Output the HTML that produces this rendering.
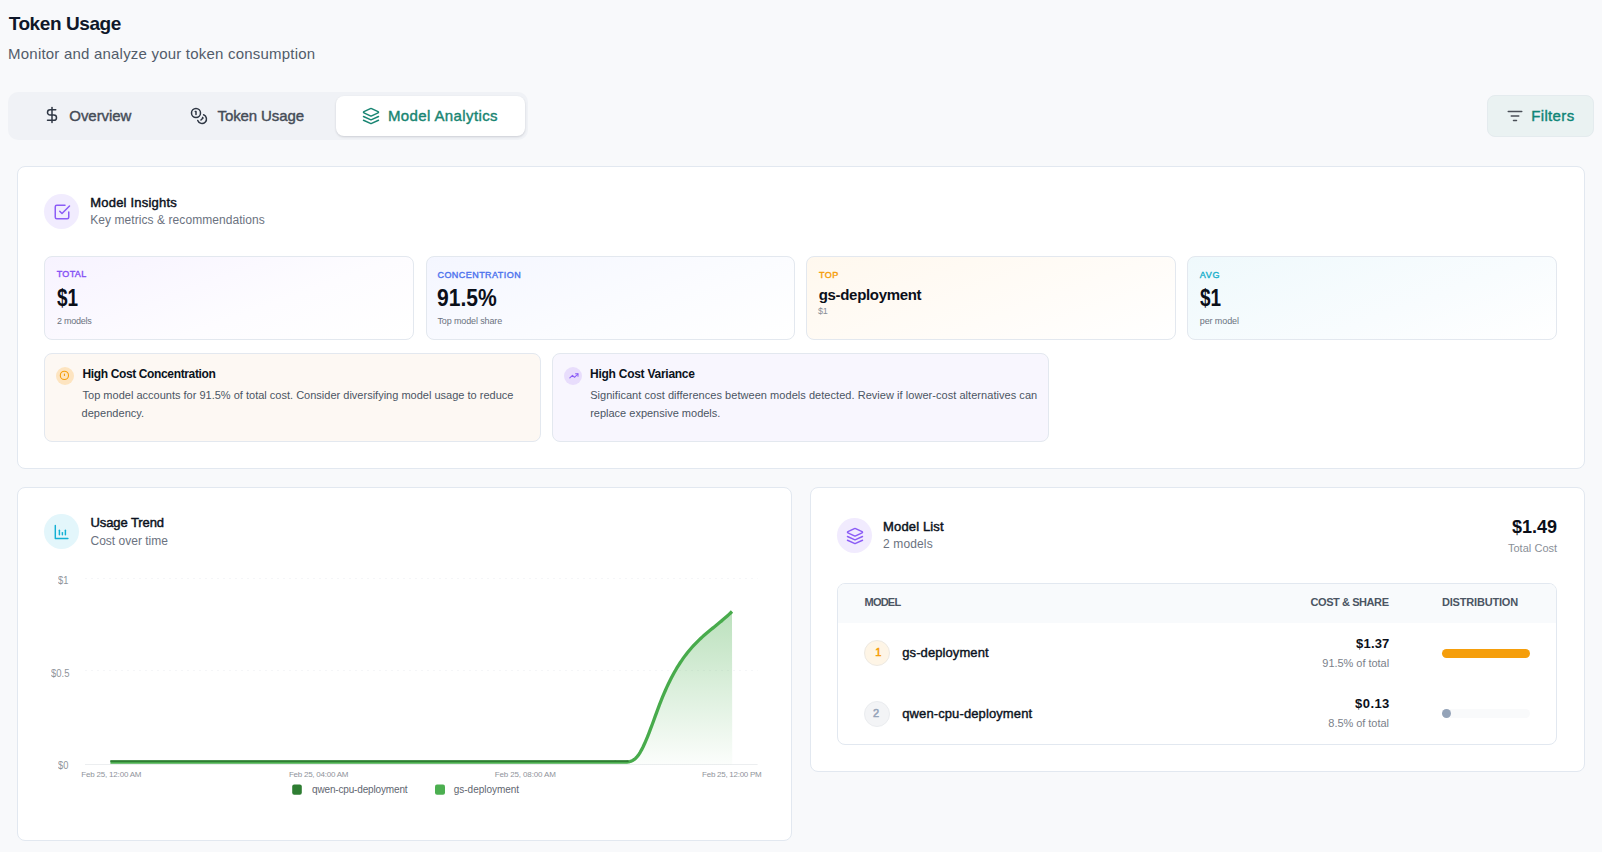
<!DOCTYPE html>
<html><head><meta charset="utf-8"><title>Token Usage</title>
<style>
html,body{margin:0;padding:0;}
body{width:1602px;height:852px;overflow:hidden;background:#f8f9fb;position:relative;font-family:"Liberation Sans", sans-serif;}
.b{position:absolute;}
.ic{position:absolute;overflow:visible;}
.t{position:absolute;white-space:nowrap;}
</style></head><body>
<div class="b" style="left:8px;top:92px;width:520px;height:48px;background:#f0f2f6;border-radius:10px;"></div>
<div class="b" style="left:336px;top:96px;width:189px;height:40px;background:#fff;border-radius:8px;box-shadow:0 1px 2px rgba(16,24,40,.10),0 1px 3px rgba(16,24,40,.06);"></div>
<div class="b" style="left:1487px;top:95px;width:107px;height:42px;background:#eaf2f2;border-radius:8px;border:1px solid #e4ebee;box-sizing:border-box;"></div>
<div class="b" style="left:17px;top:166px;width:1568px;height:303px;background:#fff;border:1px solid #e2e8f0;border-radius:8px;box-sizing:border-box;"></div>
<div class="b" style="left:44px;top:193.7px;width:35.2px;height:35.20000000000002px;background:#f1ecfe;border-radius:50%;"></div>
<div class="b" style="left:44px;top:256px;width:369.5px;height:84px;background:linear-gradient(160deg,#f7f3ff 0%,#fdfcff 60%,#ffffff 100%);border:1px solid #e3e8ef;border-radius:8px;box-sizing:border-box;"></div>
<div class="b" style="left:425.5px;top:256px;width:369.5px;height:84px;background:linear-gradient(160deg,#f4f6ff 0%,#fbfcff 60%,#ffffff 100%);border:1px solid #e3e8ef;border-radius:8px;box-sizing:border-box;"></div>
<div class="b" style="left:806px;top:256px;width:369.5px;height:84px;background:linear-gradient(160deg,#fff8ee 0%,#fffcf8 60%,#ffffff 100%);border:1px solid #e3e8ef;border-radius:8px;box-sizing:border-box;"></div>
<div class="b" style="left:1187px;top:256px;width:369.5px;height:84px;background:linear-gradient(160deg,#eff9fc 0%,#f8fcfe 60%,#ffffff 100%);border:1px solid #e3e8ef;border-radius:8px;box-sizing:border-box;"></div>
<div class="b" style="left:44px;top:353px;width:496.5px;height:88.5px;background:#fdf8f3;border:1px solid #e3e8ef;border-radius:8px;box-sizing:border-box;"></div>
<div class="b" style="left:552px;top:353px;width:496.5px;height:88.5px;background:#f8f6fe;border:1px solid #e3e8ef;border-radius:8px;box-sizing:border-box;"></div>
<div class="b" style="left:56px;top:367px;width:18px;height:18px;background:#fde4c0;border-radius:50%;"></div>
<div class="b" style="left:564px;top:367px;width:18px;height:18px;background:#e8ddfc;border-radius:50%;"></div>
<div class="b" style="left:17px;top:487px;width:775px;height:354px;background:#fff;border:1px solid #e2e8f0;border-radius:8px;box-sizing:border-box;"></div>
<div class="b" style="left:44.1px;top:513.9px;width:35.300000000000004px;height:35.5px;background:#e3f6fb;border-radius:50%;"></div>
<div class="b" style="left:810px;top:487px;width:775px;height:285px;background:#fff;border:1px solid #e2e8f0;border-radius:8px;box-sizing:border-box;"></div>
<div class="b" style="left:837.1px;top:517.9px;width:35.10000000000002px;height:35.10000000000002px;background:#f1ebfe;border-radius:50%;"></div>
<div class="b" style="left:837px;top:583px;width:720px;height:162px;background:#fff;border:1px solid #e2e8f0;border-radius:8px;box-sizing:border-box;overflow:hidden;"></div>
<div class="b" style="left:838px;top:584px;width:718px;height:39px;background:#f8fafc;border-radius:7px 7px 0 0;"></div>
<div class="b" style="left:864px;top:640px;width:26px;height:26px;background:#fef5e6;border:1px solid #ede9e2;border-radius:50%;box-sizing:border-box;"></div>
<div class="b" style="left:864px;top:701px;width:26px;height:26px;background:#f3f4f6;border:1px solid #eaecef;border-radius:50%;box-sizing:border-box;"></div>
<div class="b" style="left:1442px;top:649px;width:88px;height:9px;background:#f59e0b;border-radius:5px;"></div>
<div class="b" style="left:1442px;top:709px;width:88px;height:9px;background:#f9fafb;border-radius:5px;"></div>
<div class="b" style="left:1442px;top:709px;width:8.5px;height:9px;background:#94a3b8;border-radius:5px;"></div>
<svg class="ic" style="left:42.6px;top:106.3px;width:18px;height:18px" viewBox="0 0 24 24" fill="none" stroke="#2f3744" stroke-width="2" stroke-linecap="round" stroke-linejoin="round"><line x1="12" x2="12" y1="2" y2="22"/><path d="M17 5H9.5a3.5 3.5 0 0 0 0 7h5a3.5 3.5 0 0 1 0 7H6"/></svg>
<svg class="ic" style="left:189.7px;top:106.5px;width:18px;height:18px" viewBox="0 0 24 24" fill="none" stroke="#2f3744" stroke-width="2" stroke-linecap="round" stroke-linejoin="round"><circle cx="8" cy="8" r="6"/><path d="M18.09 10.37A6 6 0 1 1 10.34 18"/><path d="M7 6h1v4"/><path d="m16.71 13.88.7.71-2.82 2.82"/></svg>
<svg class="ic" style="left:361.5px;top:106.5px;width:18px;height:18px" viewBox="0 0 24 24" fill="none" stroke="#188572" stroke-width="2" stroke-linecap="round" stroke-linejoin="round"><path d="M12.83 2.18a2 2 0 0 0-1.66 0L2.6 6.08a1 1 0 0 0 0 1.83l8.58 3.91a2 2 0 0 0 1.66 0l8.58-3.9a1 1 0 0 0 0-1.83Z"/><path d="m22 17.65-9.17 4.16a2 2 0 0 1-1.66 0L2 17.65"/><path d="m22 12.65-9.17 4.16a2 2 0 0 1-1.66 0L2 12.65"/></svg>
<svg class="ic" style="left:1505.5px;top:106.5px;width:18px;height:18px" viewBox="0 0 24 24" fill="none" stroke="#4a4f57" stroke-width="2" stroke-linecap="round" stroke-linejoin="round"><path d="M3 6h18"/><path d="M7 12h10"/><path d="M10 18h4"/></svg>
<svg class="ic" style="left:53px;top:202.7px;width:18px;height:18px" viewBox="0 0 24 24" fill="none" stroke="#8b5cf6" stroke-width="2" stroke-linecap="round" stroke-linejoin="round"><polyline points="9 11 12 14 22 4"/><path d="M21 12v7a2 2 0 0 1-2 2H5a2 2 0 0 1-2-2V5a2 2 0 0 1 2-2h11"/></svg>
<svg class="ic" style="left:0;top:0;width:1602px;height:852px" viewBox="0 0 1602 852"><circle cx="64.4" cy="375.4" r="4.1" fill="none" stroke="#f59e0b" stroke-width="1.1"/><line x1="64.45" y1="374.1" x2="64.45" y2="375.5" stroke="#f59e0b" stroke-width="1.1" stroke-linecap="round"/></svg>
<svg class="ic" style="left:569.0px;top:370.7px;width:9.8px;height:9.8px" viewBox="0 0 24 24" fill="none" stroke="#8b5cf6" stroke-width="2.5" stroke-linecap="round" stroke-linejoin="round"><polyline points="22 7 13.5 15.5 8.5 10.5 2 17"/><polyline points="16 7 22 7 22 13"/></svg>
<svg class="ic" style="left:0;top:0;width:1602px;height:852px" viewBox="0 0 1602 852" fill="none" stroke="#12b0d4" stroke-width="1.45" stroke-linecap="round" stroke-linejoin="round"><path d="M55.3 525.4V538.4H67.9"/><path d="M59.4 530.2V534.8"/><path d="M62.4 532.6V534.8"/><path d="M65.4 530.2V534.8"/></svg>
<svg class="ic" style="left:846px;top:527px;width:18px;height:18px" viewBox="0 0 24 24" fill="none" stroke="#8b5cf6" stroke-width="2" stroke-linecap="round" stroke-linejoin="round"><path d="M12.83 2.18a2 2 0 0 0-1.66 0L2.6 6.08a1 1 0 0 0 0 1.83l8.58 3.91a2 2 0 0 0 1.66 0l8.58-3.9a1 1 0 0 0 0-1.83Z"/><path d="m22 17.65-9.17 4.16a2 2 0 0 1-1.66 0L2 17.65"/><path d="m22 12.65-9.17 4.16a2 2 0 0 1-1.66 0L2 12.65"/></svg>
<svg style="position:absolute;left:0;top:0;width:1602px;height:852px;pointer-events:none" viewBox="0 0 1602 852">
<defs><linearGradient id="gf" x1="0" y1="0" x2="0" y2="1"><stop offset="0" stop-color="#4caf50" stop-opacity="0.38"/><stop offset="1" stop-color="#4caf50" stop-opacity="0.02"/></linearGradient></defs>
<line x1="85" y1="578.5" x2="757.6" y2="578.5" stroke="#f5f6f8" stroke-width="1" stroke-dasharray="2 4"/>
<line x1="85" y1="670.5" x2="757.6" y2="670.5" stroke="#f5f6f8" stroke-width="1" stroke-dasharray="2 4"/>
<line x1="85" y1="764.5" x2="757.6" y2="764.5" stroke="#eceef0" stroke-width="1"/>
<path d="M110.4,761.8L615,761.8L615.00,761.70L616.48,761.75L617.96,761.79L619.44,761.80L620.92,761.80L622.41,761.80L623.89,761.80L625.37,761.78L626.85,761.70L628.33,761.53L629.81,761.24L631.29,760.78L632.77,760.10L634.25,759.16L635.73,757.91L637.22,756.31L638.70,754.34L640.18,752.01L641.66,749.37L643.14,746.44L644.62,743.25L646.10,739.85L647.58,736.25L649.06,732.51L650.54,728.63L652.03,724.67L653.51,720.65L654.99,716.61L656.47,712.57L657.95,708.57L659.43,704.65L660.91,700.83L662.39,697.15L663.87,693.60L665.35,690.18L666.84,686.89L668.32,683.73L669.80,680.69L671.28,677.76L672.76,674.95L674.24,672.25L675.72,669.66L677.20,667.16L678.68,664.77L680.16,662.46L681.65,660.25L683.13,658.13L684.61,656.08L686.09,654.12L687.57,652.23L689.05,650.41L690.53,648.66L692.01,646.97L693.49,645.34L694.97,643.77L696.46,642.25L697.94,640.78L699.42,639.35L700.90,637.96L702.38,636.60L703.86,635.28L705.34,633.99L706.82,632.72L708.30,631.48L709.78,630.25L711.27,629.03L712.75,627.82L714.23,626.62L715.71,625.42L717.19,624.22L718.67,623.01L720.15,621.79L721.63,620.56L723.11,619.31L724.59,618.04L726.08,616.74L727.56,615.41L729.04,614.06L730.52,612.66L732.00,611.22L732.25,764.5L110.40,764.5Z" fill="url(#gf)" stroke="none"/>
<path d="M110.4,761.8L615,761.8L615.00,761.70L616.48,761.75L617.96,761.79L619.44,761.80L620.92,761.80L622.41,761.80L623.89,761.80L625.37,761.78L626.85,761.70L628.33,761.53L629.81,761.24L631.29,760.78L632.77,760.10L634.25,759.16L635.73,757.91L637.22,756.31L638.70,754.34L640.18,752.01L641.66,749.37L643.14,746.44L644.62,743.25L646.10,739.85L647.58,736.25L649.06,732.51L650.54,728.63L652.03,724.67L653.51,720.65L654.99,716.61L656.47,712.57L657.95,708.57L659.43,704.65L660.91,700.83L662.39,697.15L663.87,693.60L665.35,690.18L666.84,686.89L668.32,683.73L669.80,680.69L671.28,677.76L672.76,674.95L674.24,672.25L675.72,669.66L677.20,667.16L678.68,664.77L680.16,662.46L681.65,660.25L683.13,658.13L684.61,656.08L686.09,654.12L687.57,652.23L689.05,650.41L690.53,648.66L692.01,646.97L693.49,645.34L694.97,643.77L696.46,642.25L697.94,640.78L699.42,639.35L700.90,637.96L702.38,636.60L703.86,635.28L705.34,633.99L706.82,632.72L708.30,631.48L709.78,630.25L711.27,629.03L712.75,627.82L714.23,626.62L715.71,625.42L717.19,624.22L718.67,623.01L720.15,621.79L721.63,620.56L723.11,619.31L724.59,618.04L726.08,616.74L727.56,615.41L729.04,614.06L730.52,612.66L732.00,611.22" transform="translate(0,0.3)" fill="none" stroke="#48ab4c" stroke-width="3.3" stroke-linecap="butt" stroke-linejoin="round"/>
<path d="M110.40,761.2L628.65,761.2" fill="none" stroke="#2e7d32" stroke-width="1.8" stroke-linecap="butt"/>
<rect x="292.2" y="784.5" width="9.6" height="10.3" rx="2" fill="#2e7d32"/>
<rect x="435" y="784.5" width="10" height="10.3" rx="2" fill="#4caf50"/>
</svg>
<div id="title" class="t" style="left:8.66px;top:14.00px;font-size:19px;line-height:19px;font-weight:700;color:#0f1729;letter-spacing:-0.420px;">Token Usage</div>
<div id="sub" class="t" style="left:8.10px;top:45.90px;font-size:15px;line-height:15px;font-weight:400;color:#525c6a;letter-spacing:0.207px;">Monitor and analyze your token consumption</div>
<div id="tab1" class="t" style="left:69.30px;top:107.90px;font-size:15px;line-height:15px;font-weight:400;color:#454c57;letter-spacing:-0.051px;-webkit-text-stroke:0.4px #454c57;">Overview</div>
<div id="tab2" class="t" style="left:217.50px;top:107.90px;font-size:15px;line-height:15px;font-weight:400;color:#454c57;letter-spacing:-0.100px;-webkit-text-stroke:0.4px #454c57;">Token Usage</div>
<div id="tab3" class="t" style="left:387.90px;top:107.90px;font-size:15px;line-height:15px;font-weight:400;color:#188572;letter-spacing:0.394px;-webkit-text-stroke:0.4px #188572;">Model Analytics</div>
<div id="filt" class="t" style="left:1531.30px;top:108.00px;font-size:15px;line-height:15px;font-weight:400;color:#0f8577;letter-spacing:0.333px;-webkit-text-stroke:0.4px #0f8577;">Filters</div>
<div id="mi_t" class="t" style="left:90.22px;top:195.50px;font-size:13px;line-height:13px;font-weight:400;color:#0b1220;letter-spacing:0.210px;-webkit-text-stroke:0.45px #0b1220;">Model Insights</div>
<div id="mi_s" class="t" style="left:90.28px;top:214.00px;font-size:12px;line-height:12px;font-weight:400;color:#6b7280;letter-spacing:0.065px;">Key metrics &amp; recommendations</div>
<div id="m1_l" class="t" style="left:56.66px;top:269.70px;font-size:9px;line-height:9px;font-weight:400;color:#8652f5;letter-spacing:0.350px;-webkit-text-stroke:0.4px #8652f5;">TOTAL</div>
<div id="m1_v" class="t" style="left:57.12px;top:286.90px;font-size:23px;line-height:23px;font-weight:700;color:#0b0f19;letter-spacing:0.000px;transform:scaleX(0.8219);transform-origin:0 0;">$1</div>
<div id="m1_s" class="t" style="left:57.06px;top:316.80px;font-size:9px;line-height:9px;font-weight:400;color:#6b7280;letter-spacing:-0.269px;">2 models</div>
<div id="m2_l" class="t" style="left:437.46px;top:270.50px;font-size:9px;line-height:9px;font-weight:400;color:#4f74ee;letter-spacing:0.451px;-webkit-text-stroke:0.4px #4f74ee;">CONCENTRATION</div>
<div id="m2_v" class="t" style="left:437.12px;top:287.20px;font-size:23px;line-height:23px;font-weight:700;color:#0b0f19;letter-spacing:0.000px;transform:scaleX(0.9160);transform-origin:0 0;">91.5%</div>
<div id="m2_s" class="t" style="left:437.46px;top:317.20px;font-size:9px;line-height:9px;font-weight:400;color:#6b7280;letter-spacing:-0.125px;">Top model share</div>
<div id="m3_l" class="t" style="left:819.06px;top:270.50px;font-size:9px;line-height:9px;font-weight:400;color:#f59e0b;letter-spacing:0.400px;-webkit-text-stroke:0.4px #f59e0b;">TOP</div>
<div id="m3_v" class="t" style="left:818.70px;top:286.90px;font-size:15px;line-height:15px;font-weight:700;color:#0b0f19;letter-spacing:-0.313px;">gs-deployment</div>
<div id="m3_s" class="t" style="left:818.06px;top:306.90px;font-size:9px;line-height:9px;font-weight:400;color:#8a8f98;letter-spacing:-0.400px;">$1</div>
<div id="m4_l" class="t" style="left:1199.86px;top:270.50px;font-size:9px;line-height:9px;font-weight:400;color:#1cb0cc;letter-spacing:0.600px;-webkit-text-stroke:0.4px #1cb0cc;">AVG</div>
<div id="m4_v" class="t" style="left:1199.62px;top:287.20px;font-size:23px;line-height:23px;font-weight:700;color:#0b0f19;letter-spacing:0.000px;transform:scaleX(0.8219);transform-origin:0 0;">$1</div>
<div id="m4_s" class="t" style="left:1199.86px;top:316.90px;font-size:9px;line-height:9px;font-weight:400;color:#6b7280;letter-spacing:-0.124px;">per model</div>
<div id="a1_t" class="t" style="left:82.48px;top:367.70px;font-size:12px;line-height:12px;font-weight:700;color:#0b1220;letter-spacing:-0.364px;">High Cost Concentration</div>
<div id="a1_b1" class="t" style="left:82.54px;top:389.60px;font-size:11px;line-height:11px;font-weight:400;color:#4b5563;letter-spacing:0.005px;">Top model accounts for 91.5% of total cost. Consider diversifying model usage to reduce</div>
<div id="a1_b2" class="t" style="left:81.54px;top:408.10px;font-size:11px;line-height:11px;font-weight:400;color:#4b5563;letter-spacing:0.040px;">dependency.</div>
<div id="a2_t" class="t" style="left:590.08px;top:367.70px;font-size:12px;line-height:12px;font-weight:700;color:#0b1220;letter-spacing:-0.265px;">High Cost Variance</div>
<div id="a2_b1" class="t" style="left:590.14px;top:389.60px;font-size:11px;line-height:11px;font-weight:400;color:#4b5563;letter-spacing:0.044px;">Significant cost differences between models detected. Review if lower-cost alternatives can</div>
<div id="a2_b2" class="t" style="left:590.14px;top:408.10px;font-size:11px;line-height:11px;font-weight:400;color:#4b5563;letter-spacing:0.000px;">replace expensive models.</div>
<div id="ut_t" class="t" style="left:90.42px;top:516.40px;font-size:13px;line-height:13px;font-weight:400;color:#0b1220;letter-spacing:-0.080px;-webkit-text-stroke:0.45px #0b1220;">Usage Trend</div>
<div id="ut_s" class="t" style="left:90.48px;top:535.40px;font-size:12px;line-height:12px;font-weight:400;color:#6b7280;letter-spacing:0.010px;">Cost over time</div>
<div id="ax1" class="t" style="left:58.00px;top:576.30px;font-size:10px;line-height:10px;font-weight:400;color:#8f949b;letter-spacing:0.000px;transform:scaleX(0.9300);transform-origin:0 0;">$1</div>
<div id="ax2" class="t" style="left:50.80px;top:669.00px;font-size:10px;line-height:10px;font-weight:400;color:#8f949b;letter-spacing:0.000px;transform:scaleX(0.9500);transform-origin:0 0;">$0.5</div>
<div id="ax3" class="t" style="left:58.00px;top:761.00px;font-size:10px;line-height:10px;font-weight:400;color:#8f949b;letter-spacing:0.000px;transform:scaleX(0.9300);transform-origin:0 0;">$0</div>
<div id="xl1" class="t" style="left:81.32px;top:770.50px;font-size:8px;line-height:8px;font-weight:400;color:#8f949b;letter-spacing:-0.196px;">Feb 25, 12:00 AM</div>
<div id="xl2" class="t" style="left:288.92px;top:770.50px;font-size:8px;line-height:8px;font-weight:400;color:#8f949b;letter-spacing:-0.245px;">Feb 25, 04:00 AM</div>
<div id="xl3" class="t" style="left:494.72px;top:770.50px;font-size:8px;line-height:8px;font-weight:400;color:#8f949b;letter-spacing:-0.133px;">Feb 25, 08:00 AM</div>
<div id="xl4" class="t" style="left:702.12px;top:770.50px;font-size:8px;line-height:8px;font-weight:400;color:#8f949b;letter-spacing:-0.267px;">Feb 25, 12:00 PM</div>
<div id="lg1" class="t" style="left:312.00px;top:785.00px;font-size:10px;line-height:10px;font-weight:400;color:#5f6670;letter-spacing:-0.156px;">qwen-cpu-deployment</div>
<div id="lg2" class="t" style="left:453.80px;top:785.00px;font-size:10px;line-height:10px;font-weight:400;color:#5f6670;letter-spacing:-0.028px;">gs-deployment</div>
<div id="ml_t" class="t" style="left:883.02px;top:520.20px;font-size:13px;line-height:13px;font-weight:400;color:#0b1220;letter-spacing:0.151px;-webkit-text-stroke:0.45px #0b1220;">Model List</div>
<div id="ml_s" class="t" style="left:883.08px;top:538.20px;font-size:12px;line-height:12px;font-weight:400;color:#6b7280;letter-spacing:0.126px;">2 models</div>
<div id="tot_v" class="t" style="left:1512.12px;top:518.20px;font-size:18px;line-height:18px;font-weight:700;color:#0b0f19;letter-spacing:-0.050px;">$1.49</div>
<div id="tot_l" class="t" style="left:1507.94px;top:543.30px;font-size:11px;line-height:11px;font-weight:400;color:#8a8f98;letter-spacing:0.033px;">Total Cost</div>
<div id="h1" class="t" style="left:864.54px;top:597.10px;font-size:11px;line-height:11px;font-weight:700;color:#4b5563;letter-spacing:-0.775px;">MODEL</div>
<div id="h2" class="t" style="left:1310.54px;top:597.20px;font-size:11px;line-height:11px;font-weight:700;color:#4b5563;letter-spacing:-0.426px;">COST &amp; SHARE</div>
<div id="h3" class="t" style="left:1441.94px;top:597.20px;font-size:11px;line-height:11px;font-weight:700;color:#4b5563;letter-spacing:-0.182px;">DISTRIBUTION</div>
<div id="r1_n" class="t" style="left:875.14px;top:647.10px;font-size:11px;line-height:11px;font-weight:400;color:#f59e0b;letter-spacing:0.000px;-webkit-text-stroke:0.55px #f59e0b;">1</div>
<div id="r1_m" class="t" style="left:902.22px;top:646.00px;font-size:13px;line-height:13px;font-weight:400;color:#0b1220;letter-spacing:0.093px;-webkit-text-stroke:0.4px #0b1220;">gs-deployment</div>
<div id="r1_c" class="t" style="left:1356.02px;top:637.40px;font-size:13px;line-height:13px;font-weight:700;color:#0b0f19;letter-spacing:0.200px;">$1.37</div>
<div id="r1_p" class="t" style="left:1322.34px;top:658.20px;font-size:11px;line-height:11px;font-weight:400;color:#7b818a;letter-spacing:-0.038px;">91.5% of total</div>
<div id="r2_n" class="t" style="left:872.94px;top:708.10px;font-size:11px;line-height:11px;font-weight:400;color:#94a3b8;letter-spacing:0.000px;-webkit-text-stroke:0.55px #94a3b8;">2</div>
<div id="r2_m" class="t" style="left:902.22px;top:706.50px;font-size:13px;line-height:13px;font-weight:400;color:#0b1220;letter-spacing:0.109px;-webkit-text-stroke:0.4px #0b1220;">qwen-cpu-deployment</div>
<div id="r2_c" class="t" style="left:1355.02px;top:697.30px;font-size:13px;line-height:13px;font-weight:700;color:#0b0f19;letter-spacing:0.450px;">$0.13</div>
<div id="r2_p" class="t" style="left:1328.34px;top:718.40px;font-size:11px;line-height:11px;font-weight:400;color:#7b818a;letter-spacing:-0.042px;">8.5% of total</div>
</body></html>
